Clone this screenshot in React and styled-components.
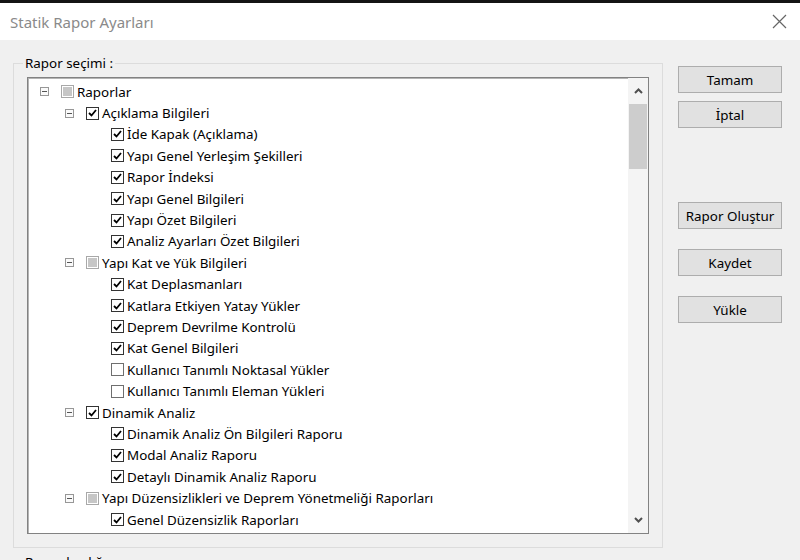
import React from "react";
import styled, { createGlobalStyle } from "styled-components";

const GlobalStyle = createGlobalStyle`
  html, body {
    margin: 0;
    padding: 0;
    background: #f0f0f0;
    overflow: hidden;
  }
  body {
    font-family: "Noto Sans", "Open Sans", sans-serif;
    font-size: 13.4px;
    color: #000;
  }
`;

const Window = styled.div`
  width: 800px;
  height: 560px;
  box-sizing: border-box;
  border-top: 3px solid #141414;
  background: #f0f0f0;
  display: flex;
  flex-direction: column;
  overflow: hidden;
`;

const TitleBar = styled.div`
  height: 37px;
  flex-shrink: 0;
  background: #fff;
  display: flex;
  align-items: center;
  justify-content: space-between;
  padding: 0 13px 0 10px;
`;

const Title = styled.span`
  font-size: 15px;
  color: #8a8a8a;
`;

const CloseIcon = styled.svg`
  width: 15px;
  height: 15px;
  stroke: #666;
  stroke-width: 1.2;
`;

const Content = styled.div`
  display: flex;
  align-items: flex-start;
  padding-left: 13px;
  flex-shrink: 0;
`;

const Group = styled.fieldset`
  margin: 15px 0 0 0;
  width: 650px;
  height: 493px;
  box-sizing: border-box;
  border: 1px solid #dcdcdc;
  padding: 6px 13px 13px 13px;
  min-width: 0;
`;

const Legend = styled.legend`
  font-size: 13.4px;
  line-height: 16px;
  padding: 0 2px;
  margin-left: -4px;
`;

const ListBox = styled.div`
  display: flex;
  height: 457px;
  box-sizing: border-box;
  background: #fff;
  border: 1px solid #828282;
  box-shadow: inset 1px 1px 0 #b4b4b4;
`;

const Tree = styled.div`
  flex: 1;
  padding-top: 3px;
  overflow: hidden;
`;

const Row = styled.div`
  height: 21.4px;
  display: flex;
  align-items: center;
  padding-left: ${(p) => 12 + p.$level * 25}px;
  white-space: nowrap;
`;

const Expander = styled.span`
  width: 9px;
  height: 9px;
  box-sizing: border-box;
  margin-right: 12px;
  flex-shrink: 0;
  border: 1px solid ${(p) => (p.$hidden ? "transparent" : "#979797")};
  background: ${(p) => (p.$hidden ? "transparent" : "#fafafa")};
  display: flex;
  align-items: center;
  justify-content: center;

  &::after {
    content: "";
    display: ${(p) => (p.$hidden ? "none" : "block")};
    width: 5px;
    height: 1px;
    background: #555;
  }
`;

const Box = styled.span`
  width: 13px;
  height: 13px;
  box-sizing: border-box;
  flex-shrink: 0;
  background: #fff;
  border: 1px solid ${(p) => (p.$state === "partial" ? "#a8a8a8" : p.$state === "checked" ? "#333" : "#6f6f6f")};
  display: flex;
  align-items: center;
  justify-content: center;
`;

const PartialFill = styled.span`
  width: 9px;
  height: 9px;
  background: #c6c6c6;
`;

const Label = styled.span`
  margin-left: 3px;
  font-size: 13.4px;
  line-height: 16px;
`;

const ScrollBar = styled.div`
  width: 20px;
  background: #f4f4f4;
  display: flex;
  flex-direction: column;
  align-items: center;
`;

const ArrowBtn = styled.div`
  height: 26px;
  width: 100%;
  display: flex;
  align-items: center;
  justify-content: center;
  flex-shrink: 0;
`;

const Thumb = styled.div`
  width: 18px;
  height: 65px;
  background: #cdcdcd;
`;

const Track = styled.div`
  flex: 1;
`;

const Chevron = styled.svg`
  width: 9px;
  height: 6px;
  fill: none;
  stroke: #505050;
  stroke-width: 2;
`;

const ButtonColumn = styled.div`
  display: flex;
  flex-direction: column;
  margin: 26px 0 0 15px;
  width: 104px;
`;

const Button = styled.button`
  height: 27px;
  margin-top: ${(p) => p.$gap || 0}px;
  background: #e1e1e1;
  border: 1px solid #adadad;
  font-family: "Noto Sans", "Open Sans", sans-serif;
  font-size: 13.4px;
  color: #000;
  padding: 0;
`;

const LowerGroup = styled.div`
  margin: 6px 0 0 25px;
  font-size: 13.4px;
  line-height: 16px;
`;

const tree = [
  { label: "Raporlar", level: 0, state: "partial", node: true },
  { label: "Açıklama Bilgileri", level: 1, state: "checked", node: true },
  { label: "İde Kapak (Açıklama)", level: 2, state: "checked" },
  { label: "Yapı Genel Yerleşim Şekilleri", level: 2, state: "checked" },
  { label: "Rapor İndeksi", level: 2, state: "checked" },
  { label: "Yapı Genel Bilgileri", level: 2, state: "checked" },
  { label: "Yapı Özet Bilgileri", level: 2, state: "checked" },
  { label: "Analiz Ayarları Özet Bilgileri", level: 2, state: "checked" },
  { label: "Yapı Kat ve Yük Bilgileri", level: 1, state: "partial", node: true },
  { label: "Kat Deplasmanları", level: 2, state: "checked" },
  { label: "Katlara Etkiyen Yatay Yükler", level: 2, state: "checked" },
  { label: "Deprem Devrilme Kontrolü", level: 2, state: "checked" },
  { label: "Kat Genel Bilgileri", level: 2, state: "checked" },
  { label: "Kullanıcı Tanımlı Noktasal Yükler", level: 2, state: "none" },
  { label: "Kullanıcı Tanımlı Eleman Yükleri", level: 2, state: "none" },
  { label: "Dinamik Analiz", level: 1, state: "checked", node: true },
  { label: "Dinamik Analiz Ön Bilgileri Raporu", level: 2, state: "checked" },
  { label: "Modal Analiz Raporu", level: 2, state: "checked" },
  { label: "Detaylı Dinamik Analiz Raporu", level: 2, state: "checked" },
  { label: "Yapı Düzensizlikleri ve Deprem Yönetmeliği Raporları", level: 1, state: "partial", node: true },
  { label: "Genel Düzensizlik Raporları", level: 2, state: "checked" },
];

function CheckBox({ state }) {
  return (
    <Box $state={state}>
      {state === "checked" && (
        <svg width="9" height="8" viewBox="0 0 9 8">
          <path d="M1 4 L3.5 6.5 L8 1" fill="none" stroke="#000" strokeWidth="1.8" />
        </svg>
      )}
      {state === "partial" && <PartialFill />}
    </Box>
  );
}

const buttons = [
  { text: "Tamam", gap: 0 },
  { text: "İptal", gap: 8 },
  { text: "Rapor Oluştur", gap: 74 },
  { text: "Kaydet", gap: 20 },
  { text: "Yükle", gap: 20 },
];

export default function App() {
  return (
    <>
      <GlobalStyle />
      <Window>
        <TitleBar>
          <Title>Statik Rapor Ayarları</Title>
          <CloseIcon viewBox="0 0 15 15">
            <path d="M1 1 L14 14 M14 1 L1 14" />
          </CloseIcon>
        </TitleBar>
        <Content>
          <Group>
            <Legend>Rapor seçimi :</Legend>
            <ListBox>
              <Tree>
                {tree.map((item, i) => (
                  <Row key={i} $level={item.level}>
                    <Expander $hidden={!item.node} />
                    <CheckBox state={item.state} />
                    <Label>{item.label}</Label>
                  </Row>
                ))}
              </Tree>
              <ScrollBar>
                <ArrowBtn>
                  <Chevron viewBox="0 0 9 6">
                    <path d="M1 5 L4.5 1.5 L8 5" />
                  </Chevron>
                </ArrowBtn>
                <Thumb />
                <Track />
                <ArrowBtn>
                  <Chevron viewBox="0 0 9 6">
                    <path d="M1 1 L4.5 4.5 L8 1" />
                  </Chevron>
                </ArrowBtn>
              </ScrollBar>
            </ListBox>
          </Group>
          <ButtonColumn>
            {buttons.map((b) => (
              <Button key={b.text} $gap={b.gap}>
                {b.text}
              </Button>
            ))}
          </ButtonColumn>
        </Content>
        <LowerGroup>Rapor başlığı :</LowerGroup>
      </Window>
    </>
  );
}
